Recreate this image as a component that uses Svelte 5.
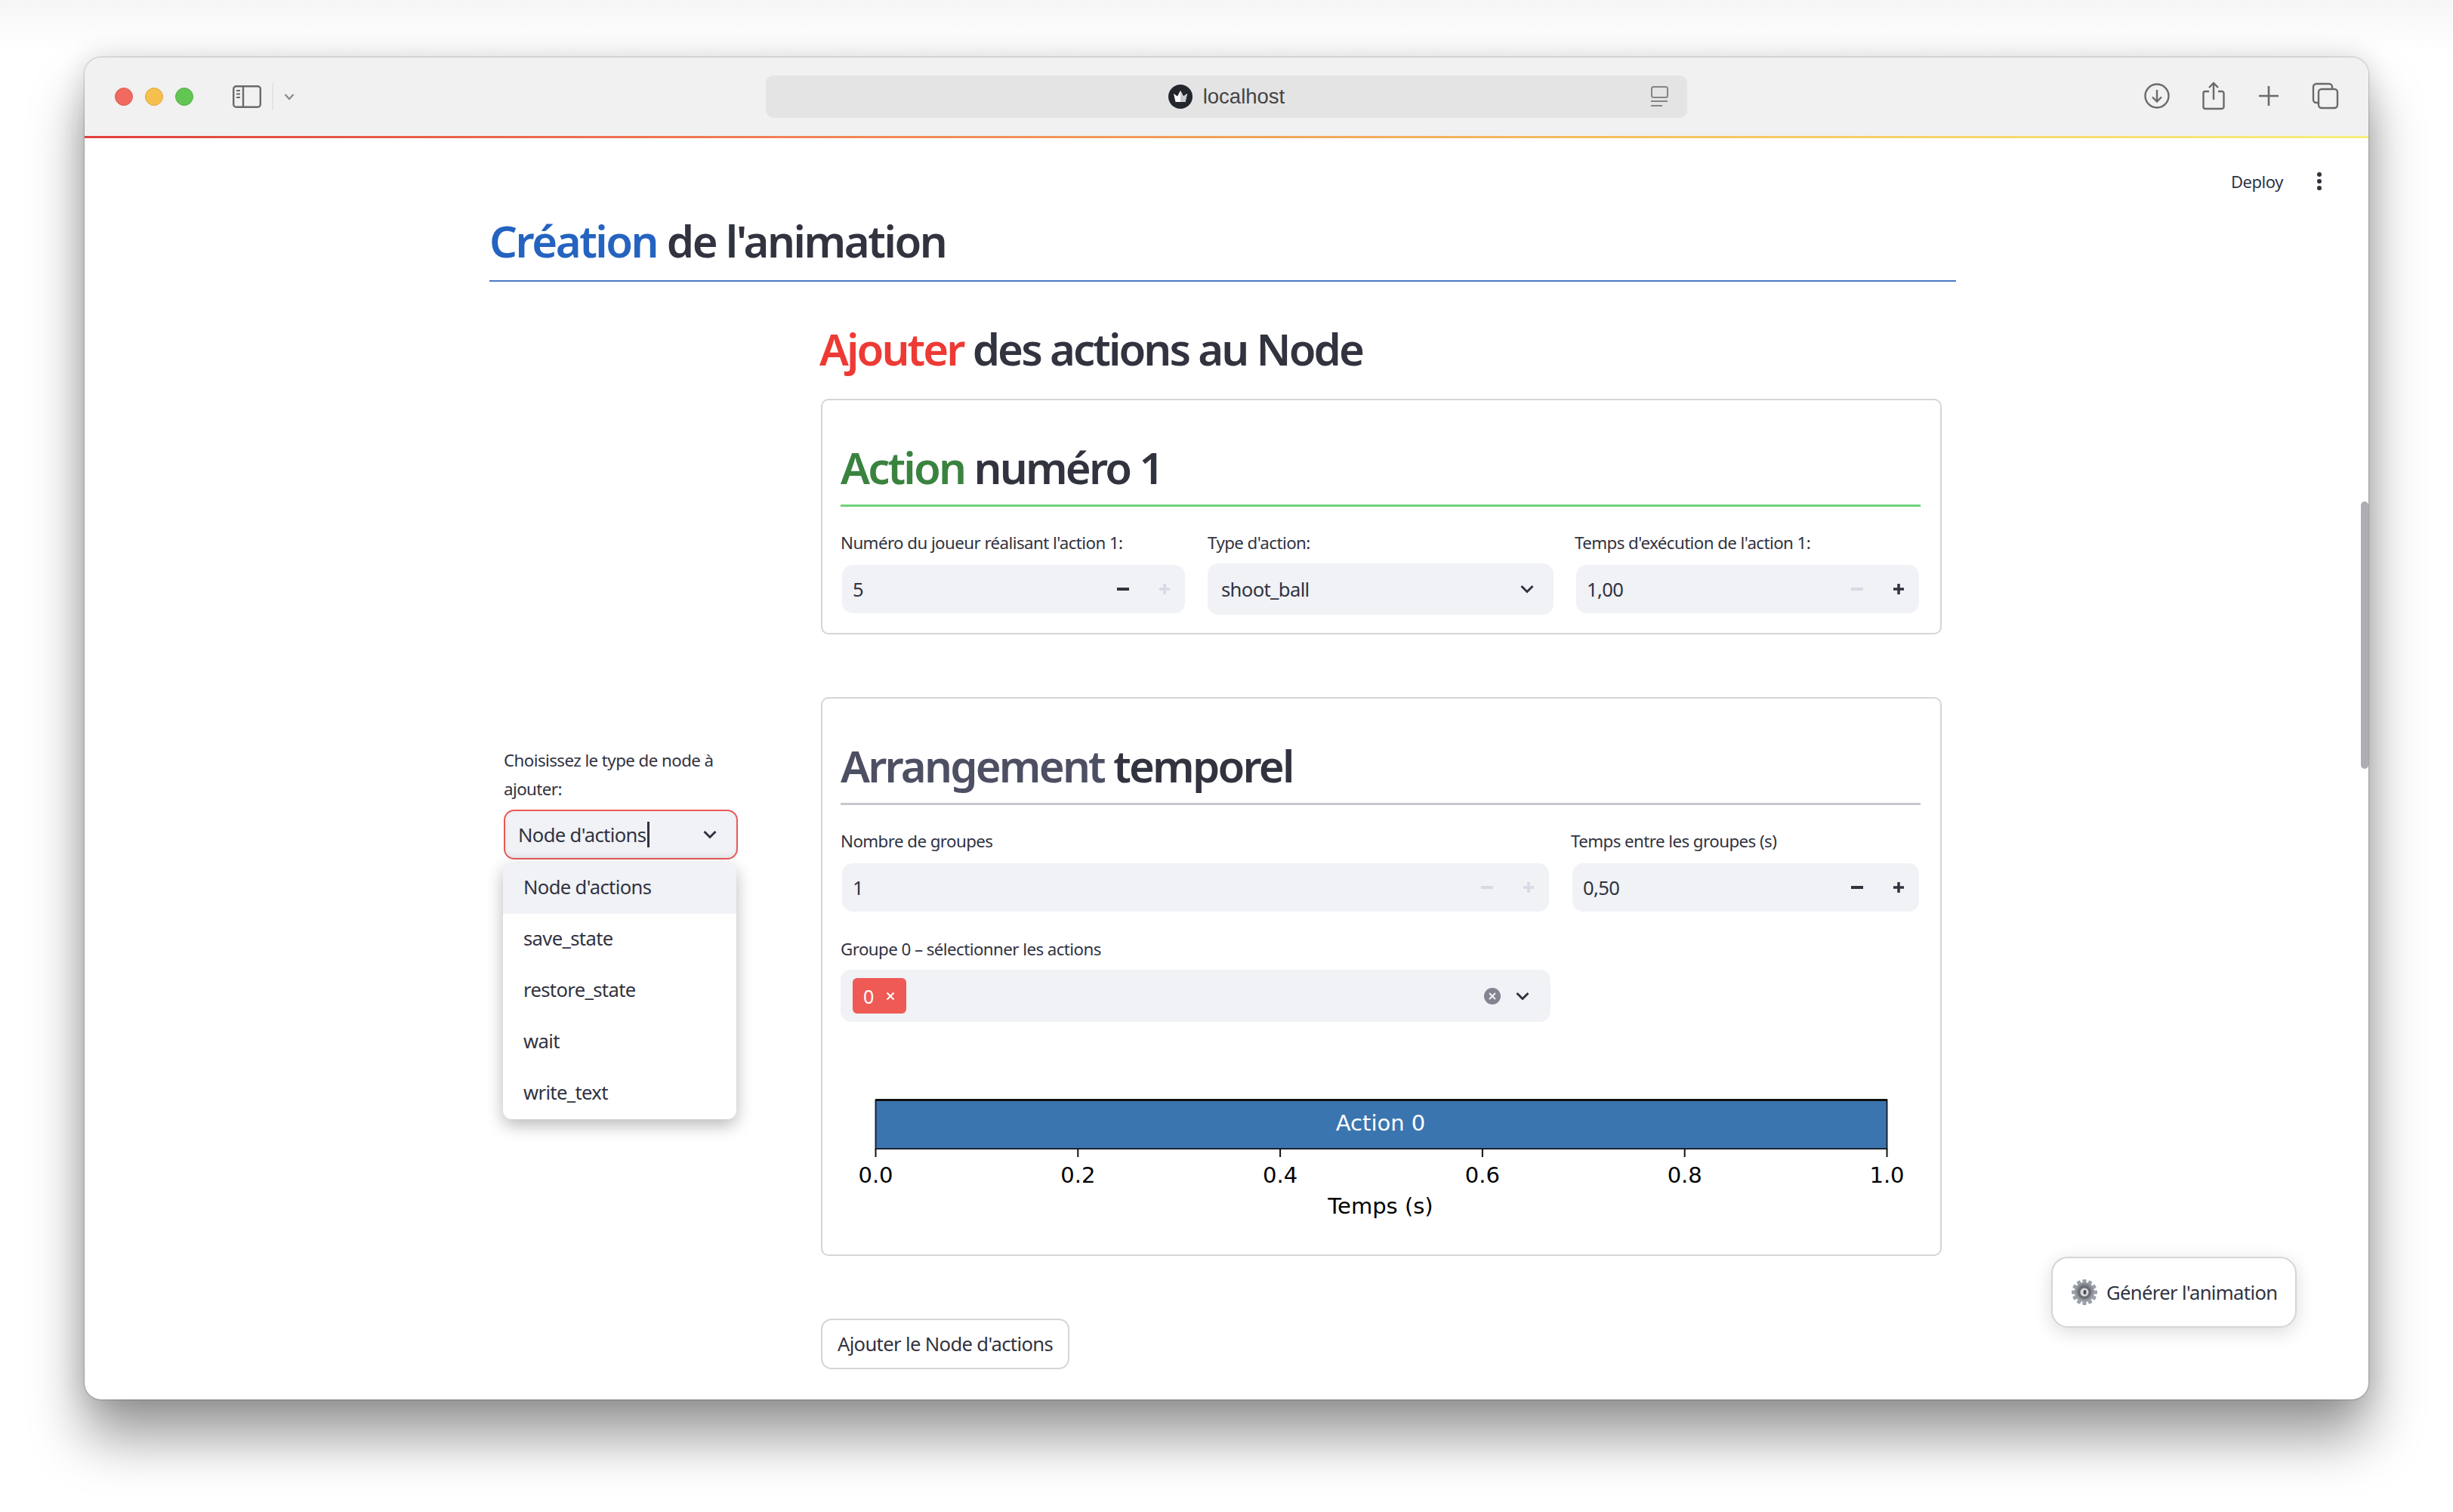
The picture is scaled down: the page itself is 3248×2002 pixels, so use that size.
<script>
  let options = ["Node d'actions", 'save_state', 'restore_state', 'wait', 'write_text'];
  let ticks = ['0.0', '0.2', '0.4', '0.6', '0.8', '1.0'];
</script>

<div class="window">
  <div class="titlebar">
    <div class="lights">
      <span class="light red"></span>
      <span class="light yellow"></span>
      <span class="light green"></span>
    </div>
    <svg class="side-icon" width="38" height="30" viewBox="0 0 38 30" fill="none" stroke="#6a6a6a" stroke-width="2.4">
      <rect x="1.2" y="1.2" width="35.6" height="27.6" rx="3.5" />
      <path d="M14 1v28" />
      <path d="M5 7h5M5 11.500h5M5 16h5" stroke-width="1.800" />
    </svg>
    <span class="side-sep"></span>
    <svg class="side-chev" width="14" height="10" viewBox="0 0 14 10" fill="none" stroke="#8a8a8a" stroke-width="2.200">
      <path d="M1.500 2 7 8l5.500-6" />
    </svg>
    <div class="address">
      <svg class="favicon" width="32" height="32" viewBox="0 0 32 32">
        <circle cx="16" cy="16" r="16" fill="#23262d" />
        <path d="M7 12l5 3.500L16 8l4 7.500 5-3.500-2.500 11h-13z" fill="#fff" />
        <path d="M16 8l4 7.500 5-3.500-2.500 11H16z" fill="#c9cbd0" />
      </svg>
      <span class="host">localhost</span>
      <svg class="reader" width="24" height="28" viewBox="0 0 24 28" fill="none" stroke="#858585" stroke-width="2">
        <rect x="2" y="1" width="21" height="14" rx="2.500" />
        <path d="M1 20h22M1 26h15" />
      </svg>
    </div>
    <div class="tools">
      <svg width="34" height="34" viewBox="0 0 34 34" fill="none" stroke="#6a6a6a" stroke-width="2.400">
        <circle cx="17" cy="17" r="15.500" />
        <path d="M17 9v15M11 18.500l6 6 6-6" />
      </svg>
      <svg width="30" height="38" viewBox="0 0 30 38" fill="none" stroke="#6a6a6a" stroke-width="2.400">
        <path d="M9 13H4a2.500 2.500 0 0 0-2.500 2.500v18A2.500 2.500 0 0 0 4 36h22a2.500 2.500 0 0 0 2.500-2.500v-18A2.500 2.500 0 0 0 26 13h-5" />
        <path d="M15 24V2M9 8l6-6 6 6" />
      </svg>
      <svg width="28" height="28" viewBox="0 0 28 28" fill="none" stroke="#6a6a6a" stroke-width="2.600">
        <path d="M14 1v26M1 14h26" />
      </svg>
      <svg width="36" height="36" viewBox="0 0 36 36" fill="none" stroke="#6a6a6a" stroke-width="2.400">
        <path d="M8 27H6a4 4 0 0 1-4-4V6a4 4 0 0 1 4-4h17a4 4 0 0 1 4 4v2" />
        <rect x="9" y="9" width="25" height="25" rx="4" />
      </svg>
    </div>
  </div>
  <div class="rainbow"></div>

  <div class="page">
    <div class="deploy">
      <span>Deploy</span>
      <svg width="8" height="26" viewBox="0 0 8 26" fill="#31333f">
        <circle cx="4" cy="4" r="3" /><circle cx="4" cy="13" r="3" /><circle cx="4" cy="22" r="3" />
      </svg>
    </div>

    <div class="block">
      <h1 class="title"><span class="blue">Création</span> de l'animation</h1>

      <div class="columns">
        <div class="left">
          <div class="lbl two-lines">Choisissez le type de node à ajouter:</div>
          <div class="node-select">
            <div class="node-input">
              <span class="val">Node d'actions</span><span class="caret"></span>
              <svg class="chev" width="20" height="12" viewBox="0 0 20 12" fill="none" stroke="#31333f" stroke-width="3">
                <path d="M2.500 2 10 9.500 17.500 2" />
              </svg>
            </div>
            <ul class="menu">
              {#each options as opt, i}
                <li class:hl={i === 0}>{opt}</li>
              {/each}
            </ul>
          </div>
        </div>

        <div class="right">
          <h2 class="sub"><span class="redtxt">Ajouter</span> des actions au Node</h2>

          <section class="card first">
            <h3 class="card-h line-green"><span class="greentxt">Action</span> numéro 1</h3>
            <div class="row three">
              <div>
                <div class="lbl">Numéro du joueur réalisant l'action 1:</div>
                <div class="num">
                  <span class="val">5</span>
                  <span class="step"><svg width="16" height="4"><rect width="16" height="4" fill="#31333f" /></svg></span>
                  <span class="step"><svg width="14" height="14"><path d="M7 0v14M0 7h14" stroke="#d5dae5" stroke-width="3.500" /></svg></span>
                </div>
              </div>
              <div>
                <div class="lbl">Type d'action:</div>
                <div class="sel">
                  <span class="val">shoot_ball</span>
                  <svg width="20" height="12" viewBox="0 0 20 12" fill="none" stroke="#31333f" stroke-width="3">
                    <path d="M2.500 2 10 9.500 17.500 2" />
                  </svg>
                </div>
              </div>
              <div>
                <div class="lbl">Temps d'exécution de l'action 1:</div>
                <div class="num">
                  <span class="val">1,00</span>
                  <span class="step"><svg width="16" height="4"><rect width="16" height="4" fill="#d5dae5" /></svg></span>
                  <span class="step"><svg width="14" height="14"><path d="M7 0v14M0 7h14" stroke="#31333f" stroke-width="3.500" /></svg></span>
                </div>
              </div>
            </div>
          </section>

          <section class="card second">
            <h3 class="card-h line-grey"><span class="greytxt">Arrangement</span> temporel</h3>
            <div class="row two">
              <div>
                <div class="lbl">Nombre de groupes</div>
                <div class="num">
                  <span class="val">1</span>
                  <span class="step"><svg width="16" height="4"><rect width="16" height="4" fill="#d5dae5" /></svg></span>
                  <span class="step"><svg width="14" height="14"><path d="M7 0v14M0 7h14" stroke="#d5dae5" stroke-width="3.500" /></svg></span>
                </div>
              </div>
              <div>
                <div class="lbl">Temps entre les groupes (s)</div>
                <div class="num">
                  <span class="val">0,50</span>
                  <span class="step"><svg width="16" height="4"><rect width="16" height="4" fill="#31333f" /></svg></span>
                  <span class="step"><svg width="14" height="14"><path d="M7 0v14M0 7h14" stroke="#31333f" stroke-width="3.500" /></svg></span>
                </div>
              </div>
            </div>

            <div class="group">
              <div class="lbl">Groupe 0 – sélectionner les actions</div>
              <div class="multi">
                <span class="tag">0 <svg width="12" height="12"><path d="M1.500 1.500l9 9M10.500 1.500l-9 9" stroke="#fff" stroke-width="2" /></svg></span>
                <span class="clear"><svg width="10" height="10"><path d="M1 1l8 8M9 1l-8 8" stroke="#f0f2f6" stroke-width="2" /></svg></span>
                <svg width="20" height="12" viewBox="0 0 20 12" fill="none" stroke="#31333f" stroke-width="3">
                  <path d="M2.500 2 10 9.500 17.500 2" />
                </svg>
              </div>
            </div>

            <svg class="chart" width="1430" height="190" viewBox="0 0 1430 190">
              <rect x="46.500" y="17" width="1339" height="64" fill="#3b75af" stroke="#1a2530" stroke-width="2" />
              <path d="M46 16.500h1340" stroke="#111" stroke-width="3" />
              <text x="715" y="57" class="chart-text bar-text" text-anchor="middle">Action 0</text>
              {#each ticks as t, i}
                <path d="M{46.500 + i * 267.800} 81v11" stroke="#111" stroke-width="2" />
                <text x={46.500 + i * 267.800} y="126" class="chart-text" text-anchor="middle">{t}</text>
              {/each}
              <text x="715" y="167" class="chart-text" text-anchor="middle">Temps (s)</text>
            </svg>
          </section>

          <button class="add">Ajouter le Node d'actions</button>
        </div>
      </div>
    </div>

    <div class="scroll"></div>

    <button class="gen">
      <svg width="34" height="34" viewBox="0 0 34 34">
        <defs>
          <radialGradient id="metal" cx="50%" cy="45%" r="60%">
            <stop offset="0" stop-color="#d5d8dc" />
            <stop offset="0.45" stop-color="#777a80" />
            <stop offset="1" stop-color="#a9afb8" />
          </radialGradient>
        </defs>
        <g fill="#9aa1ab">
          {#each Array(12) as _, i}
            <rect x="14.500" y="0" width="5" height="8" rx="1" transform="rotate({i * 30} 17 17)" />
          {/each}
        </g>
        <circle cx="17" cy="17" r="13" fill="url(#metal)" />
        <circle cx="17" cy="17" r="9" fill="#6a6d73" />
        <circle cx="17" cy="17" r="5.500" fill="#d9dbde" />
        <ellipse cx="17.500" cy="17" rx="2" ry="3" fill="#4a4c50" />
      </svg>
      Générer l'animation
    </button>
  </div>
</div>

<style>
  :global(html), :global(body) {
    margin: 0;
    background: #fff;
  }
  :global(body) {
    height: 2002px;
    overflow: hidden;
    background: linear-gradient(#f6f6f6, #ffffff 70px);
  }

  .window {
    position: relative;
    width: 3024px;
    height: 1777px;
    margin: 76px 0 0 112px;
    border-radius: 22px;
    background: #fff;
    box-shadow: 0 50px 72px rgba(0, 0, 0, 0.4), 0 0 36px rgba(0, 0, 0, 0.14), 0 0 2px rgba(0, 0, 0, 0.55);
    font-family: "Noto Sans", sans-serif;
    color: #31333f;
    overflow: hidden;
  }

  .titlebar {
    height: 104px;
    background: #f1f1f1;
    display: flex;
    align-items: center;
    position: relative;
  }
  .lights {
    display: flex;
    gap: 16px;
    margin-left: 40px;
  }
  .light {
    width: 24px;
    height: 24px;
    border-radius: 50%;
    box-sizing: border-box;
  }
  .light.red { background: #f06a5f; border: 1px solid #dc5a50; }
  .light.yellow { background: #f6c04f; border: 1px solid #dfa63a; }
  .light.green { background: #62c654; border: 1px solid #52ad46; }
  .side-icon { margin-left: 52px; }
  .side-sep {
    width: 2px;
    height: 36px;
    background: #e4e4e4;
    margin-left: 14px;
  }
  .side-chev { margin-left: 14px; }
  .address {
    position: absolute;
    left: 902px;
    top: 24px;
    width: 1220px;
    height: 56px;
    border-radius: 10px;
    background: #e4e4e4;
    display: flex;
    align-items: center;
    justify-content: center;
    gap: 14px;
  }
  .host {
    font-family: "Liberation Sans", sans-serif;
    font-size: 27.500px;
    color: #444;
  }
  .reader {
    position: absolute;
    right: 25px;
    top: 14px;
  }
  .tools {
    position: absolute;
    left: 2727px;
    top: 32px;
    width: 258px;
    display: flex;
    justify-content: space-between;
    align-items: center;
  }
  .rainbow {
    height: 3px;
    background: linear-gradient(90deg, #e0403c, #f27f55 30%, #f5c35f 70%, #f8ee80);
  }

  .page {
    position: relative;
    height: 1670px;
  }
  .deploy {
    position: absolute;
    right: 61px;
    top: 42px;
    display: flex;
    align-items: center;
    gap: 44px;
    font-size: 22px;
    letter-spacing: -0.02em;
  }

  .block {
    width: 1942px;
    margin-left: 536px;
  }
  .title {
    margin: 0;
    padding: 96px 0 12px;
    line-height: 80px;
    font-size: 58px;
    font-weight: 600;
    letter-spacing: -0.042em;
    border-bottom: 2px solid #4d78c8;
  }
  .blue { color: #2563c0; }
  .redtxt { color: #ee3a34; }
  .greentxt { color: #3a833f; }
  .greytxt { color: #4d4f63; }

  .columns {
    display: grid;
    grid-template-columns: 310px 1486px;
    gap: 108px;
    padding-left: 19px;
  }
  .left {
    padding-top: 616px;
  }
  .lbl {
    font-size: 22.300px;
    line-height: 32px;
    letter-spacing: -0.025em;
    margin-top: -1px;
    padding-bottom: 1px;
  }
  .two-lines {
    line-height: 38px;
    margin-bottom: 7px;
  }
  .node-select {
    position: relative;
  }
  .node-input {
    height: 66px;
    box-sizing: border-box;
    border: 2px solid #e8595a;
    border-radius: 14px;
    background: #f0f2f6;
    display: flex;
    align-items: center;
    padding: 0 25px 0 17px;
    box-shadow: inset 0 -3px 6px rgba(0, 0, 0, 0.04);
  }
  .val {
    font-size: 25.600px;
    letter-spacing: -0.025em;
  }
  .caret {
    width: 3px;
    height: 34px;
    background: #31333f;
    margin-left: 2px;
  }
  .node-input .chev { margin-left: auto; }
  .menu {
    position: absolute;
    left: -1px;
    top: 70px;
    width: 309px;
    margin: 0;
    padding: 0;
    list-style: none;
    background: #fff;
    border-radius: 12px;
    overflow: hidden;
    box-shadow: 0 8px 22px rgba(0, 0, 0, 0.28);
  }
  .menu li {
    height: 68px;
    line-height: 66px;
    padding-left: 27px;
    font-size: 25.600px;
    letter-spacing: -0.025em;
  }
  .menu li.hl { background: #f0f2f6; }

  .sub {
    margin: 49px 0 26px;
    line-height: 80px;
    font-size: 58px;
    font-weight: 600;
    letter-spacing: -0.05em;
  }
  .card {
    box-sizing: border-box;
    width: 1484px;
    margin-left: 2px;
    border: 2px solid #d5d5d8;
    border-radius: 10px;
    padding: 55px 26px 0 24px;
  }
  .card.first { height: 312px; }
  .card.second {
    height: 740px;
    margin-top: 83px;
  }
  .card-h {
    margin: 0;
    line-height: 68px;
    padding-bottom: 15px;
    font-size: 58px;
    font-weight: 600;
    letter-spacing: -0.048em;
    border-bottom: 3px solid;
  }
  .line-green { border-color: #6fd27a; }
  .line-grey { border-color: #c8c8d0; }

  .row {
    display: grid;
    margin-top: 33px;
  }
  .row.three {
    grid-template-columns: repeat(3, 458px);
    gap: 28px;
  }
  .row.two {
    grid-template-columns: 940px 463px;
    gap: 27px;
  }
  .num {
    height: 64px;
    margin: 12px 2px 0;
    padding-left: 14px;
    display: flex;
    align-items: center;
    background: #f0f2f6;
    border-radius: 14px;
  }
  .num .val { margin-right: auto; }
  .step {
    width: 55px;
    display: flex;
    justify-content: center;
    align-items: center;
  }
  .sel {
    height: 68px;
    margin-top: 10px;
    padding: 0 25px 0 18px;
    display: flex;
    align-items: center;
    justify-content: space-between;
    background: #f0f2f6;
    border-radius: 14px;
  }
  .group {
    margin-top: 35px;
    width: 940px;
  }
  .multi {
    height: 69px;
    margin-top: 10px;
    padding: 0 27px 0 16px;
    display: flex;
    align-items: center;
    background: #f0f2f6;
    border-radius: 14px;
  }
  .tag {
    width: 71px;
    height: 47px;
    box-sizing: border-box;
    padding-left: 14px;
    display: flex;
    align-items: center;
    gap: 16px;
    border-radius: 6px;
    background: #ef5a55;
    color: #fff;
    font-size: 25px;
  }
  .clear {
    width: 22px;
    height: 22px;
    margin-left: auto;
    margin-right: 19px;
    border-radius: 50%;
    background: #83848f;
    display: flex;
    align-items: center;
    justify-content: center;
  }
  .chart {
    display: block;
    margin-top: 87px;
  }
  .chart-text {
    font-family: "DejaVu Sans", sans-serif;
    font-size: 29px;
    fill: #000;
  }
  .bar-text { fill: #fff; }

  .add {
    display: block;
    box-sizing: border-box;
    width: 329px;
    height: 67px;
    margin: 83px 0 0 2px;
    padding: 0;
    border: 2px solid #d5d5d8;
    border-radius: 14px;
    background: #fff;
    color: #31333f;
    font-family: inherit;
    font-size: 25.600px;
    letter-spacing: -0.025em;
  }

  .scroll {
    position: absolute;
    right: 0;
    top: 481px;
    width: 10px;
    height: 354px;
    border-radius: 5px;
    background: #aeaeb2;
  }
  .gen {
    position: absolute;
    left: 2604px;
    top: 1481px;
    width: 325px;
    height: 94px;
    box-sizing: border-box;
    padding: 0 0 0 25px;
    display: flex;
    align-items: center;
    gap: 12px;
    border: 2px solid #d5d5d8;
    border-radius: 22px;
    background: #fff;
    color: #31333f;
    font-family: inherit;
    font-size: 25.600px;
    letter-spacing: -0.025em;
    box-shadow: 0 6px 24px rgba(0, 0, 0, 0.14);
  }
</style>
